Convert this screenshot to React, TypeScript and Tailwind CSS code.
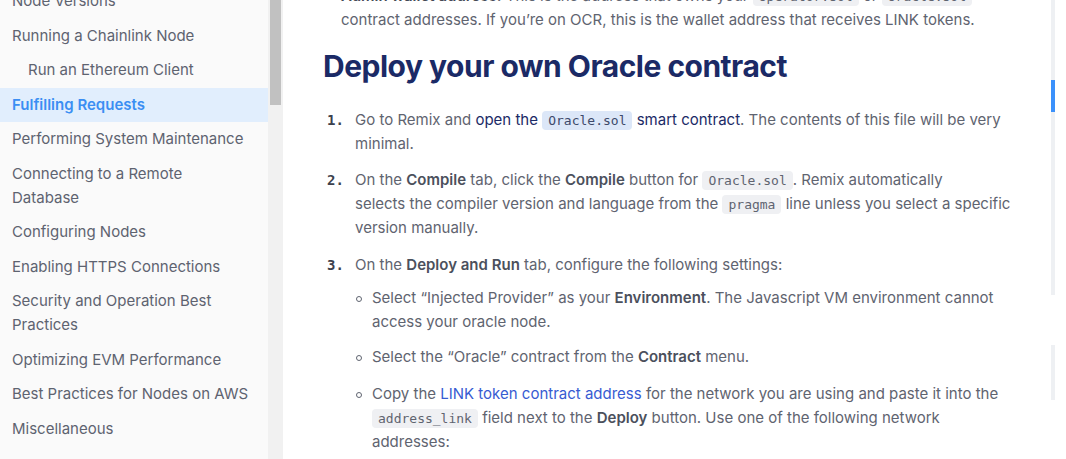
const sideItems = [
  { label: 'Node Versions' },
  { label: 'Running a Chainlink Node' },
  { label: 'Run an Ethereum Client', sub: true },
  { label: 'Fulfilling Requests', active: true },
  { label: 'Performing System Maintenance' },
  { label: 'Connecting to a Remote Database', lines: ['Connecting to a Remote', 'Database'] },
  { label: 'Configuring Nodes' },
  { label: 'Enabling HTTPS Connections' },
  { label: 'Security and Operation Best Practices', lines: ['Security and Operation Best', 'Practices'] },
  { label: 'Optimizing EVM Performance' },
  { label: 'Best Practices for Nodes on AWS' },
  { label: 'Miscellaneous' },
];

const Code = ({ children, blue }: { children: string; blue?: boolean }) => (
  <code
    className={`rounded-[4px] px-[6px] py-[2px] font-['DejaVu_Sans_Mono',monospace] text-[13px] leading-none ${
      blue ? 'bg-[#dce7f8] text-[#3d4a6b]' : 'bg-[#eff0f3] text-[#5f6470]'
    }`}
  >
    {children}
  </code>
);

const Num = ({ n }: { n: string }) => (
  <span className="w-[32px] shrink-0 pl-[4px] font-['DejaVu_Sans_Mono',monospace] text-[14px] font-bold text-[#3c414d]">
    {n}
  </span>
);

const Circle = () => (
  <span className="mt-[10px] mr-[10px] ml-[1px] h-[6px] w-[6px] shrink-0 rounded-full border border-[#5f6470]" />
);

const App = () => {
  return (
    <div className="flex h-[459px] w-[1066px] overflow-hidden bg-white font-['Inter',sans-serif] text-[15px] leading-6">
      <aside className="w-[268px] shrink-0 bg-[#fafafa]">
        <ul className="-mt-[16px]">
          {sideItems.map((item) => (
            <li
              key={item.label}
              className={`py-[5.25px] pr-3 ${item.sub ? 'pl-[28px]' : 'pl-3'} ${
                item.active ? 'bg-[#e1eefd] font-semibold text-[#3b8ef3]' : 'text-[#5e6370]'
              }`}
            >
              {item.lines ? (
                <>
                  {item.lines[0]}
                  <br />
                  {item.lines[1]}
                </>
              ) : (
                item.label
              )}
            </li>
          ))}
        </ul>
      </aside>

      <div className="w-[15px] shrink-0 bg-[#f1f1f1] px-[2px]">
        <div className="h-[105px] bg-[#c1c1c1]" />
      </div>

      <main className="relative flex-1 pl-[40px] text-[#5f6470]">
        <ul className="-mt-[16px]">
          <li className="flex">
            <span className="mt-[10px] mr-[10px] ml-[4px] h-[4px] w-[4px] shrink-0 rounded-full bg-[#5f6470]" />
            <span>
              <b className="font-semibold text-[#454a56]">Admin wallet address:</b> This is the address that owns
              your <Code>Operator.sol</Code> or <Code>Oracle.sol</Code>
              <br />
              contract addresses. If you’re on OCR, this is the wallet address that receives LINK tokens.
            </span>
          </li>
        </ul>

        <h2 className="mt-[14px] text-[30px] leading-10 font-bold tracking-[-0.5px] text-[#1b2a66]">
          Deploy your own Oracle contract
        </h2>

        <ol className="mt-[22px] flex flex-col gap-3">
          <li className="flex">
            <Num n="1." />
            <span>
              Go to Remix and{' '}
              <span className="text-[#1b2a66]">
                open the <Code blue>Oracle.sol</Code> smart contract
              </span>
              . The contents of this file will be very
              <br />
              minimal.
            </span>
          </li>
          <li className="flex">
            <Num n="2." />
            <span>
              On the <b className="font-semibold text-[#4b505c]">Compile</b> tab, click the{' '}
              <b className="font-semibold text-[#4b505c]">Compile</b> button for <Code>Oracle.sol</Code>. Remix
              automatically
              <br />
              selects the compiler version and language from the <Code>pragma</Code> line unless you select a specific
              <br />
              version manually.
            </span>
          </li>
          <li className="mt-[1px] flex">
            <Num n="3." />
            <div>
              <span>
                On the <b className="font-semibold text-[#4b505c]">Deploy and Run</b> tab, configure the following
                settings:
              </span>
              <ul className="mt-[9px] flex flex-col">
                <li className="flex">
                  <Circle />
                  <span>
                    Select “Injected Provider” as your <b className="font-semibold text-[#4b505c]">Environment</b>. The
                    Javascript VM environment cannot
                    <br />
                    access your oracle node.
                  </span>
                </li>
                <li className="mt-[11px] flex">
                  <Circle />
                  <span>
                    Select the “Oracle” contract from the <b className="font-semibold text-[#4b505c]">Contract</b> menu.
                  </span>
                </li>
                <li className="mt-[13px] flex">
                  <Circle />
                  <span>
                    Copy the <span className="text-[#375bd2]">LINK token contract address</span> for the network you
                    are using and paste it into the
                    <br />
                    <Code>address_link</Code> field next to the <b className="font-semibold text-[#4b505c]">Deploy</b>{' '}
                    button. Use one of the following network
                    <br />
                    addresses:
                  </span>
                </li>
              </ul>
            </div>
          </li>
        </ol>

        {/* table of contents progress rail */}
        <div className="absolute top-0 right-[11px] flex w-[4px] flex-col">
          <div className="h-[80px] bg-[#eef0f3]" />
          <div className="h-[32px] bg-[#3b91fb]" />
          <div className="h-[183px] bg-[#eef0f3]" />
          <div className="h-[50px]" />
          <div className="h-[55px] bg-[#eef0f3]" />
        </div>
      </main>
    </div>
  );
};

export default App;
